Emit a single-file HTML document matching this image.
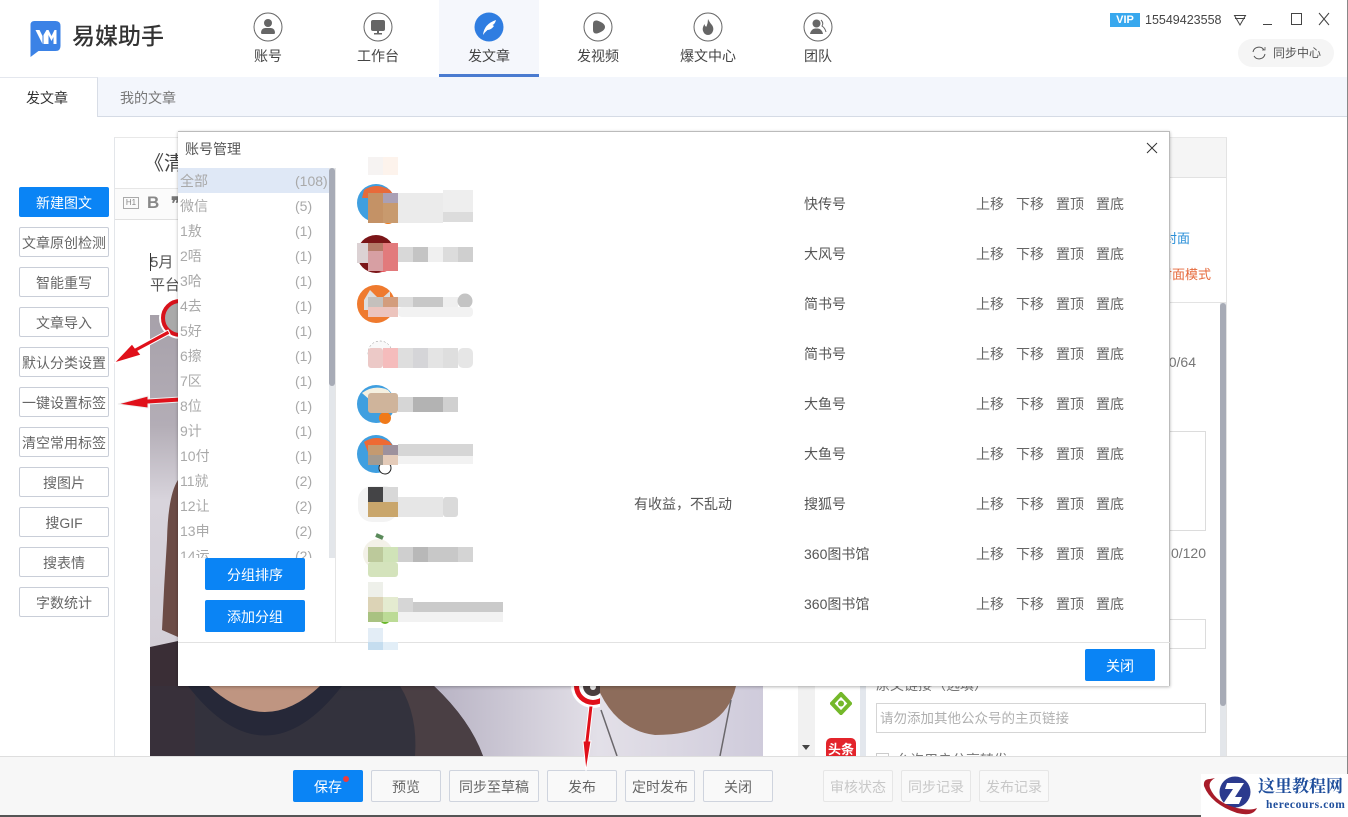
<!DOCTYPE html>
<html lang="zh-CN"><head><meta charset="utf-8"><title>易媒助手</title>
<style>
*{box-sizing:border-box}
html,body{margin:0;padding:0;width:1348px;height:817px;overflow:hidden;background:#fff}
body{position:relative;font-family:"Liberation Sans","Noto Sans CJK SC",sans-serif;font-size:14px;color:#555}
.a{position:absolute}
.t{position:absolute;white-space:nowrap;line-height:20px}
.nav{position:absolute;top:0;width:100px;height:77px;text-align:center}
.nav svg{position:absolute;left:35px;top:12px}
.nav span{position:absolute;left:0;right:0;top:46px;line-height:20px;font-size:14px;color:#444}
.sb{position:absolute;left:19px;width:90px;height:30px;line-height:30px;border:1px solid #c9ced8;border-radius:2px;background:#fff;text-align:center;font-size:14px;color:#666;white-space:nowrap}
.bb{position:absolute;top:770px;height:32px;line-height:32px;border:1px solid #cfd4de;border-radius:2px;background:#f9f9f9;text-align:center;font-size:14px;color:#666}
.dis{color:#c8c8c8;border-color:#e6e6e6}
.blue{background:#0a84f5;color:#fff;border:0;border-radius:2px;text-align:center;position:absolute}
.g{position:absolute;left:0;width:152px;height:25px;line-height:27px;color:#a9a9a9;font-size:14px}
.g b{font-weight:400;position:absolute;left:2px}
.g i{font-style:normal;position:absolute;left:117px}
.r{position:absolute;left:0;height:20px;line-height:20px;font-size:14px;color:#555}
.r span{position:absolute;white-space:nowrap}
</style></head><body>

<!-- header -->
<svg class="a" style="left:29px;top:20px" width="33" height="38" viewBox="0 0 32 38"><path d="M5 1H26Q31 1 31 6V26Q31 31 26 31H9L1 37V5Q1 1 5 1Z" fill="#3b82e6"/><path d="M6 10H10L13 16V24L6 10Z M14 24V15L17 10H19L22 16L25 10H27V24H24V17L22 21L19 15V24Z" fill="#fff"/></svg>
<div class="t" style="left:72px;top:21px;font-size:23px;line-height:30px;color:#333;font-weight:500">易媒助手</div>

<div class="a" style="left:439px;top:0;width:100px;height:77px;background:#f5f7fc;border-bottom:3px solid #4a7bd0"></div>
<div class="nav" style="left:218px"><svg width="30" height="30" viewBox="0 0 30 30"><circle cx="15" cy="15" r="14" fill="#fff" stroke="#666"/><circle cx="15" cy="11" r="4" fill="#666"/><path d="M8 21Q8 16.500 12 16H18Q22 16.500 22 21Q22 22 20 22H10Q8 22 8 21Z" fill="#666"/></svg><span>账号</span></div>
<div class="nav" style="left:328px"><svg width="30" height="30" viewBox="0 0 30 30"><circle cx="15" cy="15" r="14" fill="#fff" stroke="#666"/><rect x="8" y="8" width="14" height="11" rx="2" fill="#666"/><path d="M14 19H16V21H19V22.500H11V21H14Z" fill="#666"/></svg><span>工作台</span></div>
<div class="nav" style="left:439px"><svg width="30" height="30" viewBox="0 0 30 30"><circle cx="15" cy="15" r="14.500" fill="#2f7de1"/><path d="M9 23Q10 12 22 8Q21 12 18.500 13L20 14Q17 18 13.500 18Q11 20 9 23Z" fill="#fff"/></svg><span>发文章</span></div>
<div class="nav" style="left:548px"><svg width="30" height="30" viewBox="0 0 30 30"><circle cx="15" cy="15" r="14" fill="#fff" stroke="#666"/><path d="M10 12Q10 8 14 8.500Q22 11 22 15Q22 19 14 21.500Q10 22 10 18Z" fill="#666"/></svg><span>发视频</span></div>
<div class="nav" style="left:658px"><svg width="30" height="30" viewBox="0 0 30 30"><circle cx="15" cy="15" r="14" fill="#fff" stroke="#666"/><path d="M15 7Q17 11 19 13Q21 16 20 19Q18.500 23 15 23Q11.500 23 10 19Q9 16 11.500 12Q12 15 13.500 14.500Q15 11 15 7Z" fill="#666"/></svg><span>爆文中心</span></div>
<div class="nav" style="left:768px"><svg width="30" height="30" viewBox="0 0 30 30"><circle cx="15" cy="15" r="14" fill="#fff" stroke="#666"/><circle cx="13.500" cy="11.500" r="4" fill="#666"/><path d="M7 22Q8 17 12 16.500H15Q19 17 20 22Z" fill="#666"/><path d="M18 8Q21 11 19 14Q22 16 23 20" stroke="#666" fill="none"/></svg><span>团队</span></div>

<div class="a" style="left:1110px;top:13px;width:30px;height:14px;background:#38a8ee;color:#fff;font:bold 11px/14px 'Liberation Sans',sans-serif;text-align:center">VIP</div>
<div class="t" style="left:1145px;top:10px;font-size:12.500px;color:#444">15549423558</div>
<svg class="a" style="left:1232px;top:12px" width="100" height="16" viewBox="0 0 100 16" fill="none" stroke="#444"><path d="M2.500 3.500H13.500L8 13Z"/><path d="M3 6.500H13"/><path d="M31 12.500H40"/><rect x="59.500" y="1.500" width="10" height="11"/><path d="M87 1L97 13M97 1L87 13"/></svg>
<div class="a" style="left:1238px;top:39px;width:96px;height:28px;border-radius:14px;background:#f5f5f5"></div>
<svg class="a" style="left:1251px;top:45px" width="16" height="16" viewBox="0 0 16 16" fill="none" stroke="#555"><path d="M2 7A6 6 0 0 1 13 5M14 9A6 6 0 0 1 3 11"/><path d="M11 5H14V2" stroke-width=".8"/></svg>
<div class="t" style="left:1273px;top:43px;font-size:12px;color:#555">同步中心</div>

<!-- tab bar -->
<div class="a" style="left:0;top:77px;width:1348px;height:40px;background:#f3f6fc;border-bottom:1px solid #d5dbe5"></div>
<div class="a" style="left:0;top:77px;width:98px;height:40px;background:#fff;border-right:1px solid #d8dde6;border-top:1px solid #e4e7ee"></div>
<div class="t" style="left:26px;top:88px;color:#333">发文章</div>
<div class="t" style="left:120px;top:88px;color:#777">我的文章</div>

<!-- left sidebar -->
<div class="blue" style="left:19px;top:187px;width:90px;height:30px;line-height:32px">新建图文</div>
<div class="sb" style="top:227px">文章原创检测</div>
<div class="sb" style="top:267px">智能重写</div>
<div class="sb" style="top:307px">文章导入</div>
<div class="sb" style="top:347px">默认分类设置</div>
<div class="sb" style="top:387px">一键设置标签</div>
<div class="sb" style="top:427px">清空常用标签</div>
<div class="sb" style="top:467px">搜图片</div>
<div class="sb" style="top:507px">搜GIF</div>
<div class="sb" style="top:547px">搜表情</div>
<div class="sb" style="top:587px">字数统计</div>

<!-- editor -->
<div class="a" style="left:114px;top:137px;width:680px;height:620px;border-left:1px solid #e3e6ea;border-top:1px solid #e8e8e8"></div>
<div class="a" style="left:115px;top:188px;width:70px;height:32px;background:#fbfbfb;border-top:1px solid #e6e6e6;border-bottom:1px solid #e0e0e0"></div>
<div class="t" style="left:144px;top:150px;font-size:20px;line-height:28px;color:#444">《清</div>
<div class="a" style="left:123px;top:197px;width:16px;height:12px;border:1px solid #aaa;font:8px/10px 'Liberation Sans',sans-serif;text-align:center;color:#888">H1</div>
<div class="t" style="left:147px;top:193px;font:bold 17px/20px 'Liberation Sans',sans-serif;color:#888">B</div>
<div class="t" style="left:171px;top:194px;font:bold 17px/20px 'Liberation Sans',sans-serif;color:#777">❞</div>
<div class="a" style="left:150px;top:253px;width:1px;height:18px;background:#333"></div>
<div class="t" style="left:150px;top:252px;font-size:15px;line-height:22px;color:#555">5月</div>
<div class="t" style="left:150px;top:275px;font-size:15px;line-height:22px;color:#555">平台</div>

<!-- photo -->
<svg class="a" style="left:150px;top:315px" width="613" height="441" viewBox="0 0 613 441">
<defs>
<linearGradient id="bg" x1="0" y1="0" x2="0" y2="1"><stop offset="0" stop-color="#a7a1aa"/><stop offset=".25" stop-color="#b3adb6"/><stop offset=".42" stop-color="#d8d4dc"/><stop offset="1" stop-color="#cfcad2"/></linearGradient>
<linearGradient id="lav" x1="0" y1="0" x2="1" y2="0"><stop offset="0" stop-color="#b8b3c4"/><stop offset=".5" stop-color="#e3e0e8"/><stop offset="1" stop-color="#cfcbdb"/></linearGradient>
</defs>
<rect width="613" height="441" fill="url(#bg)"/>
<path d="M28 165Q18 180 17 225Q14 270 12 315L28 322Z" fill="#6c4c46"/>
<path d="M0 332L28 326V371H0Z" fill="#3a2e36"/>
<rect x="284" y="371" width="329" height="70" fill="url(#lav)"/>
<path d="M0 371H284Q320 405 333 441H0Z" fill="#33323d"/>
<rect y="371" width="45" height="70" fill="#38303a"/>
<path d="M250 371H284Q320 405 333 441H265Q268 400 250 371Z" fill="#4a3f44"/>
<path d="M38 371Q115 470 192 371Z" fill="#262838"/>
<path d="M59 371Q115 423 170 371Z" fill="#bf9581"/>
<path d="M447 371H586Q575 420 505 420Q465 415 447 371Z" fill="#8d6c5b"/>
<path d="M451 395L467 441M581 385L570 441" stroke="#6a676b" stroke-width="1.500" fill="none"/>
</svg>

<!-- right panel -->
<div class="a" style="left:798px;top:137px;width:429px;height:620px;background:#fff;border-right:1px solid #e3e3e3;border-top:1px solid #e8e8e8"></div>
<div class="a" style="left:799px;top:138px;width:427px;height:40px;background:#f5f5f5;border-bottom:1px solid #e2e2e2"></div>
<div class="a" style="left:799px;top:302px;width:427px;height:1px;background:#e3e3e3"></div>
<div class="t" style="right:158px;top:229px;color:#2a8fd8;font-size:13px">封面</div>
<div class="t" style="right:137px;top:265px;color:#e66a3c;font-size:13px">封面模式</div>
<div class="t" style="right:152px;top:352px;color:#777">0/64</div>
<div class="a" style="left:1000px;top:431px;width:206px;height:100px;border:1px solid #dcdcdc"></div>
<div class="t" style="right:142px;top:543px;color:#777">0/120</div>
<div class="a" style="left:1000px;top:619px;width:206px;height:30px;border:1px solid #dcdcdc"></div>
<div class="a" style="left:1220px;top:303px;width:6px;height:453px;background:#e3e6ea"></div>
<div class="a" style="left:1220px;top:303px;width:6px;height:403px;background:#a7abb6;border-radius:3px"></div>
<div class="a" style="left:798px;top:686px;width:17px;height:70px;background:#f1f1f1"></div>
<div class="a" style="left:860px;top:686px;width:6px;height:70px;background:#e3e7ed"></div>
<svg class="a" style="left:830px;top:692px" width="22" height="23" viewBox="0 0 22 23"><path d="M11 2L20 11.500L11 21L2 11.500Z" fill="none" stroke="#74b82a" stroke-width="4"/><circle cx="11" cy="11.500" r="3" fill="#74b82a"/></svg>
<div class="a" style="left:802px;top:745px;border:4px solid transparent;border-top:5px solid #444;border-bottom:0"></div>
<div class="a" style="left:826px;top:738px;width:30px;height:18px;background:#e3242b;border-radius:5px 5px 0 0;overflow:hidden;color:#fff;font:bold 13px/24px 'Liberation Sans','Noto Sans CJK SC',sans-serif;text-align:center;white-space:nowrap">头条</div>
<div class="t" style="left:876px;top:675px;font-size:14px;color:#777">原文链接（选填）</div>
<div class="a" style="left:876px;top:703px;width:330px;height:30px;border:1px solid #d5d5d5;background:#fff"></div>
<div class="t" style="left:880px;top:709px;font-size:13.500px;color:#b0b0b0">请勿添加其他公众号的主页链接</div>
<div class="a" style="left:876px;top:753px;width:13px;height:13px;border:1px solid #ccc"></div>
<div class="t" style="left:896px;top:750px;color:#777">允许用户分享转发</div>

<!-- bottom bar -->
<div class="a" style="left:0;top:756px;width:1348px;height:60px;background:#f7f7f7;border-top:1px solid #dedede"></div>
<div class="a" style="left:0;top:815px;width:1348px;height:2px;background:#555"></div>
<div class="blue" style="left:293px;top:770px;width:70px;height:32px;line-height:34px">保存</div>
<div class="a" style="left:343px;top:776px;width:6px;height:6px;border-radius:3px;background:#f03b3b"></div>
<div class="bb" style="left:371px;width:70px">预览</div>
<div class="bb" style="left:449px;width:90px">同步至草稿</div>
<div class="bb" style="left:547px;width:70px">发布</div>
<div class="bb" style="left:625px;width:70px">定时发布</div>
<div class="bb" style="left:703px;width:70px">关闭</div>
<div class="bb dis" style="left:823px;width:70px">审核状态</div>
<div class="bb dis" style="left:901px;width:70px">同步记录</div>
<div class="bb dis" style="left:979px;width:70px">发布记录</div>

<!-- annotations -->
<svg class="a" style="left:100px;top:290px" width="500" height="490" viewBox="0 0 500 490">
<circle cx="80" cy="28" r="21" fill="#fff"/>
<circle cx="80" cy="28" r="17" fill="#a9a9a9" stroke="#d8121b" stroke-width="4"/>
<path d="M68 40L70 44L38 61L41 65L14 73L32 54L35 58Z" fill="#e0101a" stroke="#fff" stroke-width="1"/>
<path d="M80 107V112L48 114V118L18 114L48 106V109Z" fill="#e0101a" stroke="#eee" stroke-width="1"/>
<circle cx="493" cy="396" r="22" fill="#fff"/>
<circle cx="493" cy="396" r="19" fill="#e0101a"/>
<circle cx="493" cy="396" r="14" fill="#fff"/>
<circle cx="493" cy="396" r="10" fill="#4b3f3f"/>
<circle cx="493" cy="397" r="3" fill="#eee"/>
<path d="M489 416L493 416L489 451L491 451L486 481L483 451L485 451Z" fill="#e0101a" stroke="#fff" stroke-width="1"/>
</svg>

<!-- watermark -->
<div class="a" style="left:1201px;top:774px;width:147px;height:43px;background:#fff"></div>
<svg class="a" style="left:1201px;top:774px" width="60" height="43" viewBox="0 0 60 43">
<circle cx="34" cy="18" r="15.500" fill="#2b3a8e"/>
<path d="M26 9H43L34 23H41L38 30H22L32 15H24Z" fill="#fff"/>
<path d="M3 12Q2 5 9 5L14 4Q7 8 9 14Q15 29 36 34Q50 37 56 34Q52 43 36 39Q10 30 3 12Z" fill="#a81c2a"/>
</svg>
<div class="t" style="left:1258px;top:776px;font:bold 17px/22px 'Liberation Serif','Noto Serif CJK SC',serif;color:#1f4e9c">这里教程网</div>
<div class="t" style="left:1266px;top:798px;font:bold 11.500px/14px 'Liberation Serif',serif;color:#1f4e9c;letter-spacing:.6px">herecours.com</div>

<!-- modal -->
<div class="a" style="left:178px;top:131px;width:992px;height:555px;background:#fff;border-right:1px solid #bbb;border-top:1px solid #bbb;box-shadow:0 1px 3px rgba(0,0,0,.3)"></div>
<div class="t" style="left:185px;top:139px;font-size:14px;color:#555">账号管理</div>
<svg class="a" style="left:1146px;top:142px" width="12" height="12" viewBox="0 0 12 12"><path d="M1 1L11 11M11 1L1 11" stroke="#333" stroke-width="1"/></svg>
<div class="a" style="left:335px;top:168px;width:1px;height:474px;background:#e6e6e6"></div>
<div class="a" style="left:178px;top:642px;width:992px;height:1px;background:#e2e2e2"></div>

<div class="a" style="left:178px;top:168px;width:152px;height:390px;overflow:hidden">
<div class="g" style="top:0;background:#dfe8f6"><b>全部</b><i>(108)</i></div>
<div class="g" style="top:25px"><b>微信</b><i>(5)</i></div>
<div class="g" style="top:50px"><b>1敖</b><i>(1)</i></div>
<div class="g" style="top:75px"><b>2唔</b><i>(1)</i></div>
<div class="g" style="top:100px"><b>3哈</b><i>(1)</i></div>
<div class="g" style="top:125px"><b>4去</b><i>(1)</i></div>
<div class="g" style="top:150px"><b>5好</b><i>(1)</i></div>
<div class="g" style="top:175px"><b>6擦</b><i>(1)</i></div>
<div class="g" style="top:200px"><b>7区</b><i>(1)</i></div>
<div class="g" style="top:225px"><b>8位</b><i>(1)</i></div>
<div class="g" style="top:250px"><b>9计</b><i>(1)</i></div>
<div class="g" style="top:275px"><b>10付</b><i>(1)</i></div>
<div class="g" style="top:300px"><b>11就</b><i>(2)</i></div>
<div class="g" style="top:325px"><b>12让</b><i>(2)</i></div>
<div class="g" style="top:350px"><b>13申</b><i>(2)</i></div>
<div class="g" style="top:375px"><b>14运</b><i>(2)</i></div>
</div>
<div class="a" style="left:329px;top:168px;width:6px;height:390px;background:#e3e6ea"></div>
<div class="a" style="left:329px;top:168px;width:6px;height:218px;background:#a7abb6;border-radius:3px"></div>
<div class="blue" style="left:205px;top:558px;width:100px;height:32px;line-height:34px">分组排序</div>
<div class="blue" style="left:205px;top:600px;width:100px;height:32px;line-height:34px">添加分组</div>
<div class="blue" style="left:1085px;top:649px;width:70px;height:32px;line-height:34px">关闭</div>

<!-- blurred avatars -->
<svg class="a" style="left:340px;top:150px" width="180" height="500" viewBox="0 0 180 500">
<rect x="28" y="7" width="15" height="18" fill="#f6f3f2"/><rect x="43" y="7" width="15" height="18" fill="#fdf3ec"/>

<circle cx="36" cy="53" r="19" fill="#3f9fe0"/><path d="M24 40Q36 32 50 40L56 48H22Z" fill="#e86a3a"/><circle cx="48" cy="66" r="8" fill="#f07a1a"/>
<rect x="28" y="43" width="15" height="30" fill="#c49266"/><rect x="43" y="43" width="15" height="10" fill="#aaa0b5"/><rect x="43" y="53" width="15" height="20" fill="#c89a6e"/>
<rect x="58" y="43" width="45" height="30" fill="#ebebeb"/><rect x="103" y="40" width="30" height="22" fill="#eee"/><rect x="103" y="62" width="30" height="10" fill="#dcdcdc"/>

<circle cx="36" cy="104" r="19" fill="#7b1518"/><circle cx="43" cy="115" r="7" fill="#e8555c"/>
<rect x="17" y="93" width="11" height="20" fill="#dcd2d4"/><rect x="28" y="93" width="15" height="8" fill="#b57a68"/><rect x="28" y="101" width="15" height="20" fill="#d79fa3"/><rect x="43" y="93" width="15" height="28" fill="#e27a7c"/>
<rect x="58" y="97" width="15" height="15" fill="#d8d8d8"/><rect x="73" y="97" width="15" height="15" fill="#c4c4c4"/><rect x="88" y="97" width="15" height="15" fill="#f0f0f0"/><rect x="103" y="97" width="15" height="15" fill="#dcdcdc"/><rect x="118" y="97" width="15" height="15" fill="#cfcfcf"/>

<circle cx="36" cy="154" r="19" fill="#ef7a2e"/><path d="M24 150L30 140L40 150L50 141V160H24Z" fill="#ddd"/>
<rect x="28" y="147" width="15" height="10" fill="#c4c0bc"/><rect x="43" y="147" width="15" height="10" fill="#d39d7d"/><rect x="28" y="157" width="30" height="10" fill="#ecc4bd"/>
<rect x="58" y="147" width="15" height="10" fill="#ddd"/><rect x="73" y="147" width="30" height="10" fill="#c8c8c8"/><rect x="103" y="147" width="15" height="10" fill="#efefef"/><circle cx="125" cy="151" r="7.500" fill="#c4c4c4"/>
<rect x="58" y="157" width="75" height="10" rx="4" fill="#f2f2f2"/>

<circle cx="40" cy="203" r="12" fill="#f9f9f9" stroke="#888" stroke-width=".5" stroke-dasharray="2 2"/>
<rect x="28" y="198" width="15" height="20" rx="3" fill="#ecc9c7"/><rect x="43" y="198" width="15" height="20" fill="#f5bcbc"/>
<rect x="58" y="198" width="15" height="20" fill="#dedede"/><rect x="73" y="198" width="15" height="20" fill="#d5d5d8"/><rect x="88" y="198" width="15" height="20" fill="#e4e4e4"/><rect x="103" y="198" width="15" height="20" fill="#dedede"/><rect x="118" y="198" width="15" height="20" rx="5" fill="#e6e6e6"/>

<circle cx="36" cy="254" r="19" fill="#3f9fe0"/><path d="M22 243Q34 234 48 240L55 248L30 250Z" fill="#f5f0e0"/><circle cx="45" cy="268" r="6" fill="#f07a1a"/>
<rect x="28" y="243" width="30" height="20" rx="3" fill="#cfb49b"/>
<rect x="58" y="247" width="15" height="15" fill="#d6d6d6"/><rect x="73" y="247" width="30" height="15" fill="#b3b3b3"/><rect x="103" y="247" width="15" height="15" fill="#d0d0d0"/>

<circle cx="36" cy="304" r="19" fill="#3f9fe0"/><path d="M24 292Q36 284 50 292L56 300L28 302Z" fill="#ee6a34"/><circle cx="45" cy="318" r="6" fill="#fff" stroke="#222"/>
<rect x="28" y="295" width="15" height="20" fill="#c49a70"/><rect x="28" y="305" width="15" height="10" fill="#a39a90"/><rect x="43" y="295" width="15" height="10" fill="#9d919d"/><rect x="43" y="305" width="15" height="10" fill="#e4cbb9"/>
<rect x="58" y="294" width="75" height="12" fill="#d6d6d6"/><rect x="58" y="306" width="75" height="8" fill="#f2f2f2"/>

<rect x="18" y="336" width="40" height="36" rx="14" fill="#f3f3f3"/>
<rect x="28" y="337" width="15" height="15" fill="#444446"/><rect x="43" y="337" width="15" height="15" fill="#d8d8d8"/><rect x="28" y="352" width="30" height="15" fill="#c9a66c"/>
<rect x="58" y="347" width="45" height="20" fill="#e6e6e6"/><rect x="103" y="347" width="15" height="20" rx="3" fill="#dadada"/>

<circle cx="38" cy="404" r="15" fill="#f3f1e8"/><path d="M36 385L43 388" stroke="#5a8a5a" stroke-width="4"/>
<rect x="28" y="397" width="15" height="15" fill="#bcc99b"/><rect x="43" y="397" width="15" height="15" fill="#d0e3b8"/><rect x="28" y="412" width="30" height="15" rx="3" fill="#d4e3bc"/>
<rect x="58" y="397" width="15" height="15" fill="#cfcfcf"/><rect x="73" y="397" width="15" height="15" fill="#b8b8b8"/><rect x="88" y="397" width="30" height="15" fill="#c8c8c8"/><rect x="118" y="397" width="15" height="15" fill="#d4d4d4"/>

<circle cx="45" cy="469" r="5" fill="#69b82a"/>
<rect x="28" y="432" width="15" height="15" fill="#eef0ea"/><rect x="28" y="447" width="15" height="15" fill="#dcd3b6"/><rect x="43" y="447" width="15" height="15" fill="#e4ebd0"/><rect x="28" y="462" width="15" height="10" fill="#a9c281"/><rect x="43" y="462" width="15" height="10" fill="#bcdb96"/>
<rect x="58" y="448" width="15" height="14" fill="#d6d6d6"/><rect x="73" y="452" width="90" height="10" fill="#cacaca"/><rect x="58" y="462" width="105" height="10" fill="#f2f2f2"/>

<rect x="28" y="478" width="15" height="14" fill="#e3edf6"/><rect x="28" y="492" width="15" height="8" fill="#c5ddef"/><rect x="43" y="492" width="15" height="8" fill="#e2eef7"/>
</svg>

<!-- rows -->
<div class="r" style="left:0;top:194px"><span style="left:804px">快传号</span><span style="left:976px;color:#666">上移</span><span style="left:1016px;color:#666">下移</span><span style="left:1056px;color:#666">置顶</span><span style="left:1096px;color:#666">置底</span></div>
<div class="r" style="left:0;top:244px"><span style="left:804px">大风号</span><span style="left:976px;color:#666">上移</span><span style="left:1016px;color:#666">下移</span><span style="left:1056px;color:#666">置顶</span><span style="left:1096px;color:#666">置底</span></div>
<div class="r" style="left:0;top:294px"><span style="left:804px">简书号</span><span style="left:976px;color:#666">上移</span><span style="left:1016px;color:#666">下移</span><span style="left:1056px;color:#666">置顶</span><span style="left:1096px;color:#666">置底</span></div>
<div class="r" style="left:0;top:344px"><span style="left:804px">简书号</span><span style="left:976px;color:#666">上移</span><span style="left:1016px;color:#666">下移</span><span style="left:1056px;color:#666">置顶</span><span style="left:1096px;color:#666">置底</span></div>
<div class="r" style="left:0;top:394px"><span style="left:804px">大鱼号</span><span style="left:976px;color:#666">上移</span><span style="left:1016px;color:#666">下移</span><span style="left:1056px;color:#666">置顶</span><span style="left:1096px;color:#666">置底</span></div>
<div class="r" style="left:0;top:444px"><span style="left:804px">大鱼号</span><span style="left:976px;color:#666">上移</span><span style="left:1016px;color:#666">下移</span><span style="left:1056px;color:#666">置顶</span><span style="left:1096px;color:#666">置底</span></div>
<div class="r" style="left:0;top:494px"><span style="left:634px">有收益，不乱动</span><span style="left:804px">搜狐号</span><span style="left:976px;color:#666">上移</span><span style="left:1016px;color:#666">下移</span><span style="left:1056px;color:#666">置顶</span><span style="left:1096px;color:#666">置底</span></div>
<div class="r" style="left:0;top:544px"><span style="left:804px">360图书馆</span><span style="left:976px;color:#666">上移</span><span style="left:1016px;color:#666">下移</span><span style="left:1056px;color:#666">置顶</span><span style="left:1096px;color:#666">置底</span></div>
<div class="r" style="left:0;top:594px"><span style="left:804px">360图书馆</span><span style="left:976px;color:#666">上移</span><span style="left:1016px;color:#666">下移</span><span style="left:1056px;color:#666">置顶</span><span style="left:1096px;color:#666">置底</span></div>

<div class="a" style="left:1347px;top:0;width:1px;height:774px;background:#888"></div>
</body></html>
